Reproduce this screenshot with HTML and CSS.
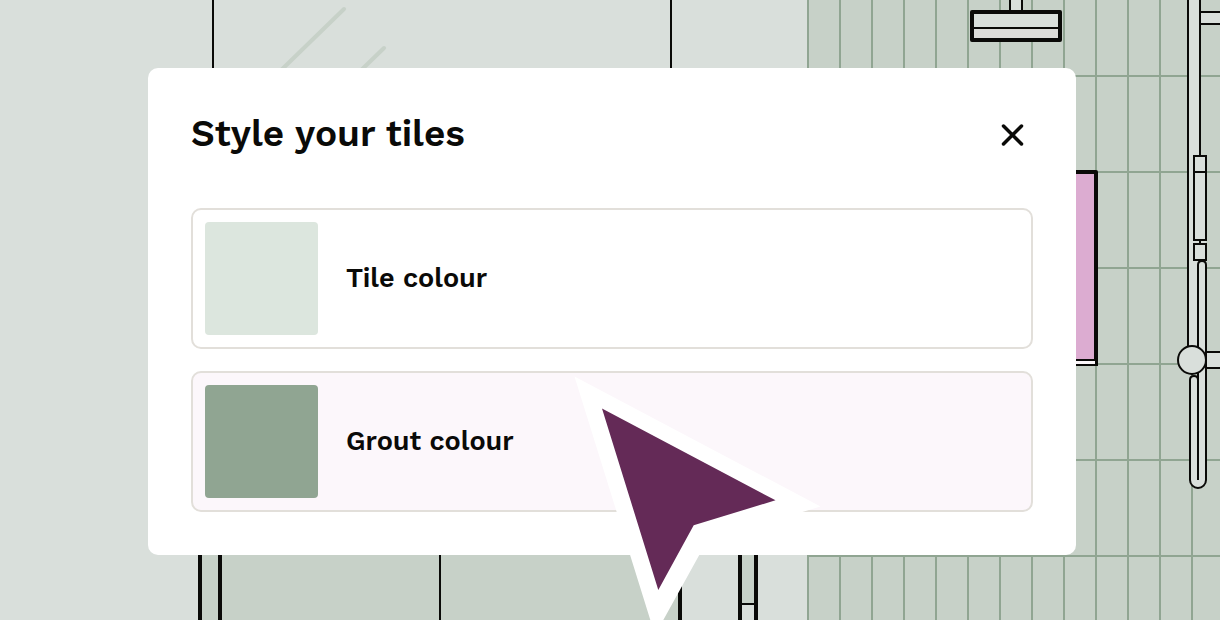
FILE: index.html
```html
<!DOCTYPE html>
<html lang="en-GB">
<head>
<meta charset="utf-8">
<meta name="viewport" content="width=device-width, initial-scale=1">
<title>Style your tiles</title>
<link rel="stylesheet" href="styles.css">
</head>
<body>
<main class="stage">
  <svg class="scene" viewBox="0 0 1220 620" preserveAspectRatio="xMidYMin slice" aria-hidden="true">
    <defs>
      <pattern id="tiles" x="807" y="75" width="32" height="96" patternUnits="userSpaceOnUse">
        <rect class="tile" width="32" height="96"/>
        <path class="grout" d="M0 0h32v2H2v94H0z"/>
      </pattern>
    </defs>
    <!-- shower screen -->
    <path class="ink" d="M213 0v80M671 0v80"/>
    <path class="glint" d="M344 9L271 80M384 48L351 80"/>
    <!-- tiled wall -->
    <rect x="807" y="0" width="413" height="620" fill="url(#tiles)"/>
    <!-- shower tray and frame -->
    <path class="tile" d="M200 540h480v80H200zM740 540h16v80h-16z"/>
    <path class="wall" d="M742 604h12v16h-12z"/>
    <path class="ink bold" d="M200 540v80M220 540v80M680 540v80M740 540v80M756 540v80"/>
    <path class="ink" d="M440 540v80M741 604h14"/>
    <!-- shower head -->
    <path class="ink wall" d="M1010 -2v14h12v-14"/>
    <rect class="ink bold wall join" x="972" y="12" width="88" height="28"/>
    <path class="shade" d="M974 29h84v9h-84z"/>
    <path class="ink" d="M974 28h84"/>
    <!-- niche -->
    <path class="niche" d="M1060 172h36v188h-36z"/>
    <path class="ink bold join" d="M1060 172h36v192"/>
    <path class="ledge" d="M1060 361h35v3h-35z"/>
    <path class="ink" d="M1060 360h36M1060 365h38"/>
    <!-- riser rail, hand shower and hose -->
    <path class="wall" d="M1188 0h12v156h6v204h-18z"/>
    <path class="ink" d="M1188 0v350M1200 0v156M1200 240v4"/>
    <path class="ink wall" d="M1222 12h-22v12h22M1222 352h-18v16h18"/>
    <path class="ink wall" d="M1194 156h12v84h-12zM1194 244h12v16h-12z"/>
    <path class="ink" d="M1194 172h12"/>
    <path class="ink wall" d="M1198 380v-115q0-4 4-4t4 4v215a8 8 0 0 1-16 0v-100q0-4 4-4t4 4v100"/>
    <path class="ink" d="M1198 360v120"/>
    <circle class="ink wall" cx="1192" cy="360" r="14"/>
  </svg>

  <section class="dialog" role="dialog" aria-labelledby="dialog-title">
    <header class="dialog-header">
      <h1 class="dialog-title" id="dialog-title">Style your tiles</h1>
      <button class="close" type="button" aria-label="Close">
        <svg class="close-icon" viewBox="0 0 24 24" aria-hidden="true"><path d="M3.500 4l18 18M21.500 4L3.500 22"/></svg>
      </button>
    </header>
    <div class="options">
      <button class="option" type="button">
        <span class="swatch swatch-tile"></span>
        <span class="option-label">Tile colour</span>
      </button>
      <button class="option option-active" type="button">
        <span class="swatch swatch-grout"></span>
        <span class="option-label">Grout colour</span>
      </button>
    </div>
  </section>

  <svg class="pointer" viewBox="0 0 1220 620" preserveAspectRatio="xMidYMin slice" aria-hidden="true">
    <path class="pointer-edge" d="M574.500 376.500L820.500 506.500L707 541L655 635z"/>
    <path class="pointer-fill" d="M602 408.500L775.500 500.300L693.700 525.200L658.300 590z"/>
  </svg>
</main>
</body>
</html>
```
FILE: styles.css
```css
* { box-sizing: border-box; }

body {
  margin: 0;
  background: #d9dfdb;
  color: #0a0a08;
  font-family: "Work Sans", Inter, "Liberation Sans", sans-serif;
}

.stage {
  position: relative;
  min-height: 100vh;
  padding: 68px 144px 64px 148px;
  overflow: hidden;
}

.scene,
.pointer {
  position: absolute;
  inset: 0;
  width: 100%;
  height: 100%;
}

.pointer { pointer-events: none; }
.pointer-edge { fill: #fff; }
.pointer-fill { fill: #642a57; }

.ink { fill: none; stroke: #0a0a08; stroke-width: 2; }
.bold { stroke-width: 4; }
.join { stroke-linejoin: round; }
.wall { fill: #d9dfdb; }
.tile { fill: #c7d1c8; }
.grout { fill: #90a592; }
.shade { fill: #dcdcd9; }
.niche { fill: #dcacd1; }
.ledge { fill: #fcf7fb; }
.glint { fill: none; stroke: #c7d1c8; stroke-width: 4; stroke-linecap: round; }

.dialog {
  position: relative;
  padding: 42px 43px 43px;
  background: #fff;
  border-radius: 10px;
}

.dialog-header {
  display: flex;
  align-items: center;
  justify-content: space-between;
  height: 48px;
  margin-bottom: 50px;
}

.dialog-title {
  margin: 0;
  font-size: 37px;
  font-weight: 600;
  line-height: 48px;
}

.close {
  display: flex;
  padding: 9px;
  border: 0;
  background: none;
  color: inherit;
  cursor: pointer;
}

.close-icon {
  width: 24px;
  height: 24px;
  fill: none;
  stroke: currentColor;
  stroke-width: 3.5;
  stroke-linecap: round;
}

.options {
  display: grid;
  gap: 22px;
}

.option {
  display: flex;
  align-items: center;
  gap: 28px;
  width: 100%;
  padding: 12px;
  border: 2px solid #e2dfda;
  border-radius: 10px;
  background: #fff;
  color: inherit;
  font: inherit;
  text-align: left;
  cursor: pointer;
}

.option-active { background: #fcf7fb; }

.swatch {
  width: 113px;
  height: 113px;
  border-radius: 4px;
}

.swatch-tile { background: #dce6de; }
.swatch-grout { background: #90a592; }

.option-label {
  padding-bottom: 2px;
  font-size: 27px;
  font-weight: 600;
  line-height: 32px;
}
```
